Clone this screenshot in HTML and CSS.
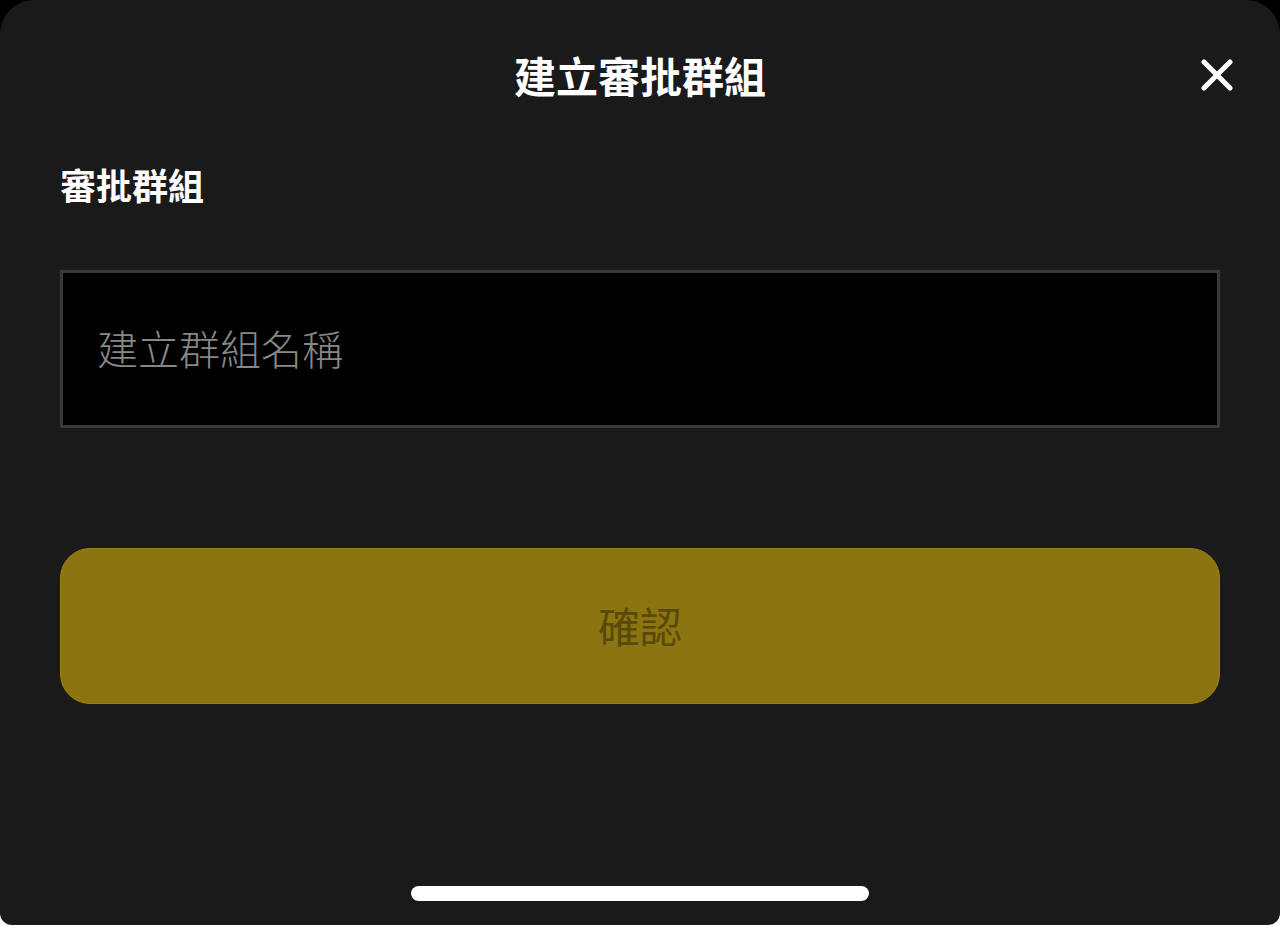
FILE: index.html
```html
<!DOCTYPE html>
<html lang="zh-Hant">

<head>
    <meta charset="UTF-8">
    <meta name="viewport" content="width=device-width, initial-scale=1.0">
    <title>建立審批群組</title>
    <link rel="stylesheet" href="styles.css">
</head>

<body>
    <div class="sheet">
        <header class="sheet-header">
            <span></span>
            <h1 class="sheet-title">建立審批群組</h1>
            <button class="close-btn" aria-label="關閉">
                <svg width="32" height="32" viewBox="0 0 32 32">
                    <path d="M3 3 L29 29 M29 3 L3 29" stroke="#fff" stroke-width="5" stroke-linecap="round" fill="none"/>
                </svg>
            </button>
        </header>
        <main class="sheet-body">
            <label class="field-label" for="group-name">審批群組</label>
            <input class="field-input" type="text" id="group-name" placeholder="建立群組名稱">
            <button class="confirm-btn" type="button">確認</button>
        </main>
        <div class="home-indicator"></div>
    </div>
</body>

</html>
```

FILE: styles.css
```css
html,
body {
    margin: 0;
    padding: 0;
    height: 100%;
}

body {
    background: linear-gradient(#000 50%, #fff 50%);
    font-family: "Noto Sans CJK TC", "Noto Sans", sans-serif;
    color: #fff;
}

.sheet {
    box-sizing: border-box;
    height: 100vh;
    background-color: #1a1a1a;
    border-radius: 34px 34px 12px 12px;
    display: flex;
    flex-direction: column;
    padding: 0 60px;
}

.sheet-header {
    height: 150px;
    display: grid;
    grid-template-columns: 1fr auto 1fr;
    align-items: center;
}

.sheet-title {
    margin: 0;
    font-size: 42px;
    font-weight: 700;
    line-height: 1;
}

.close-btn {
    justify-self: end;
    margin-right: -13px;
    width: 32px;
    height: 32px;
    padding: 0;
    border: none;
    background: none;
    cursor: pointer;
    display: flex;
}

.sheet-body {
    display: flex;
    flex-direction: column;
}

.field-label {
    margin-top: 12px;
    font-size: 36px;
    font-weight: 700;
    line-height: 44px;
}

.field-input {
    box-sizing: border-box;
    margin-top: 64px;
    height: 158px;
    width: 100%;
    background-color: #000;
    border: 3px solid #393939;
    padding: 0 34px 4px;
    font-family: inherit;
    font-size: 41px;
    font-weight: 300;
    color: #fff;
    outline: none;
}

.field-input::placeholder {
    color: #878787;
}

.confirm-btn {
    margin-top: 120px;
    height: 156px;
    width: 100%;
    background-color: #8c7410;
    border: 1px solid #9a8116;
    border-radius: 30px;
    font-family: inherit;
    font-size: 42px;
    font-weight: 400;
    color: #594a0b;
    padding-bottom: 4px;
    cursor: pointer;
}

.home-indicator {
    margin: auto auto 24px;
    width: 458px;
    height: 15px;
    border-radius: 8px;
    background-color: #fff;
}
```
